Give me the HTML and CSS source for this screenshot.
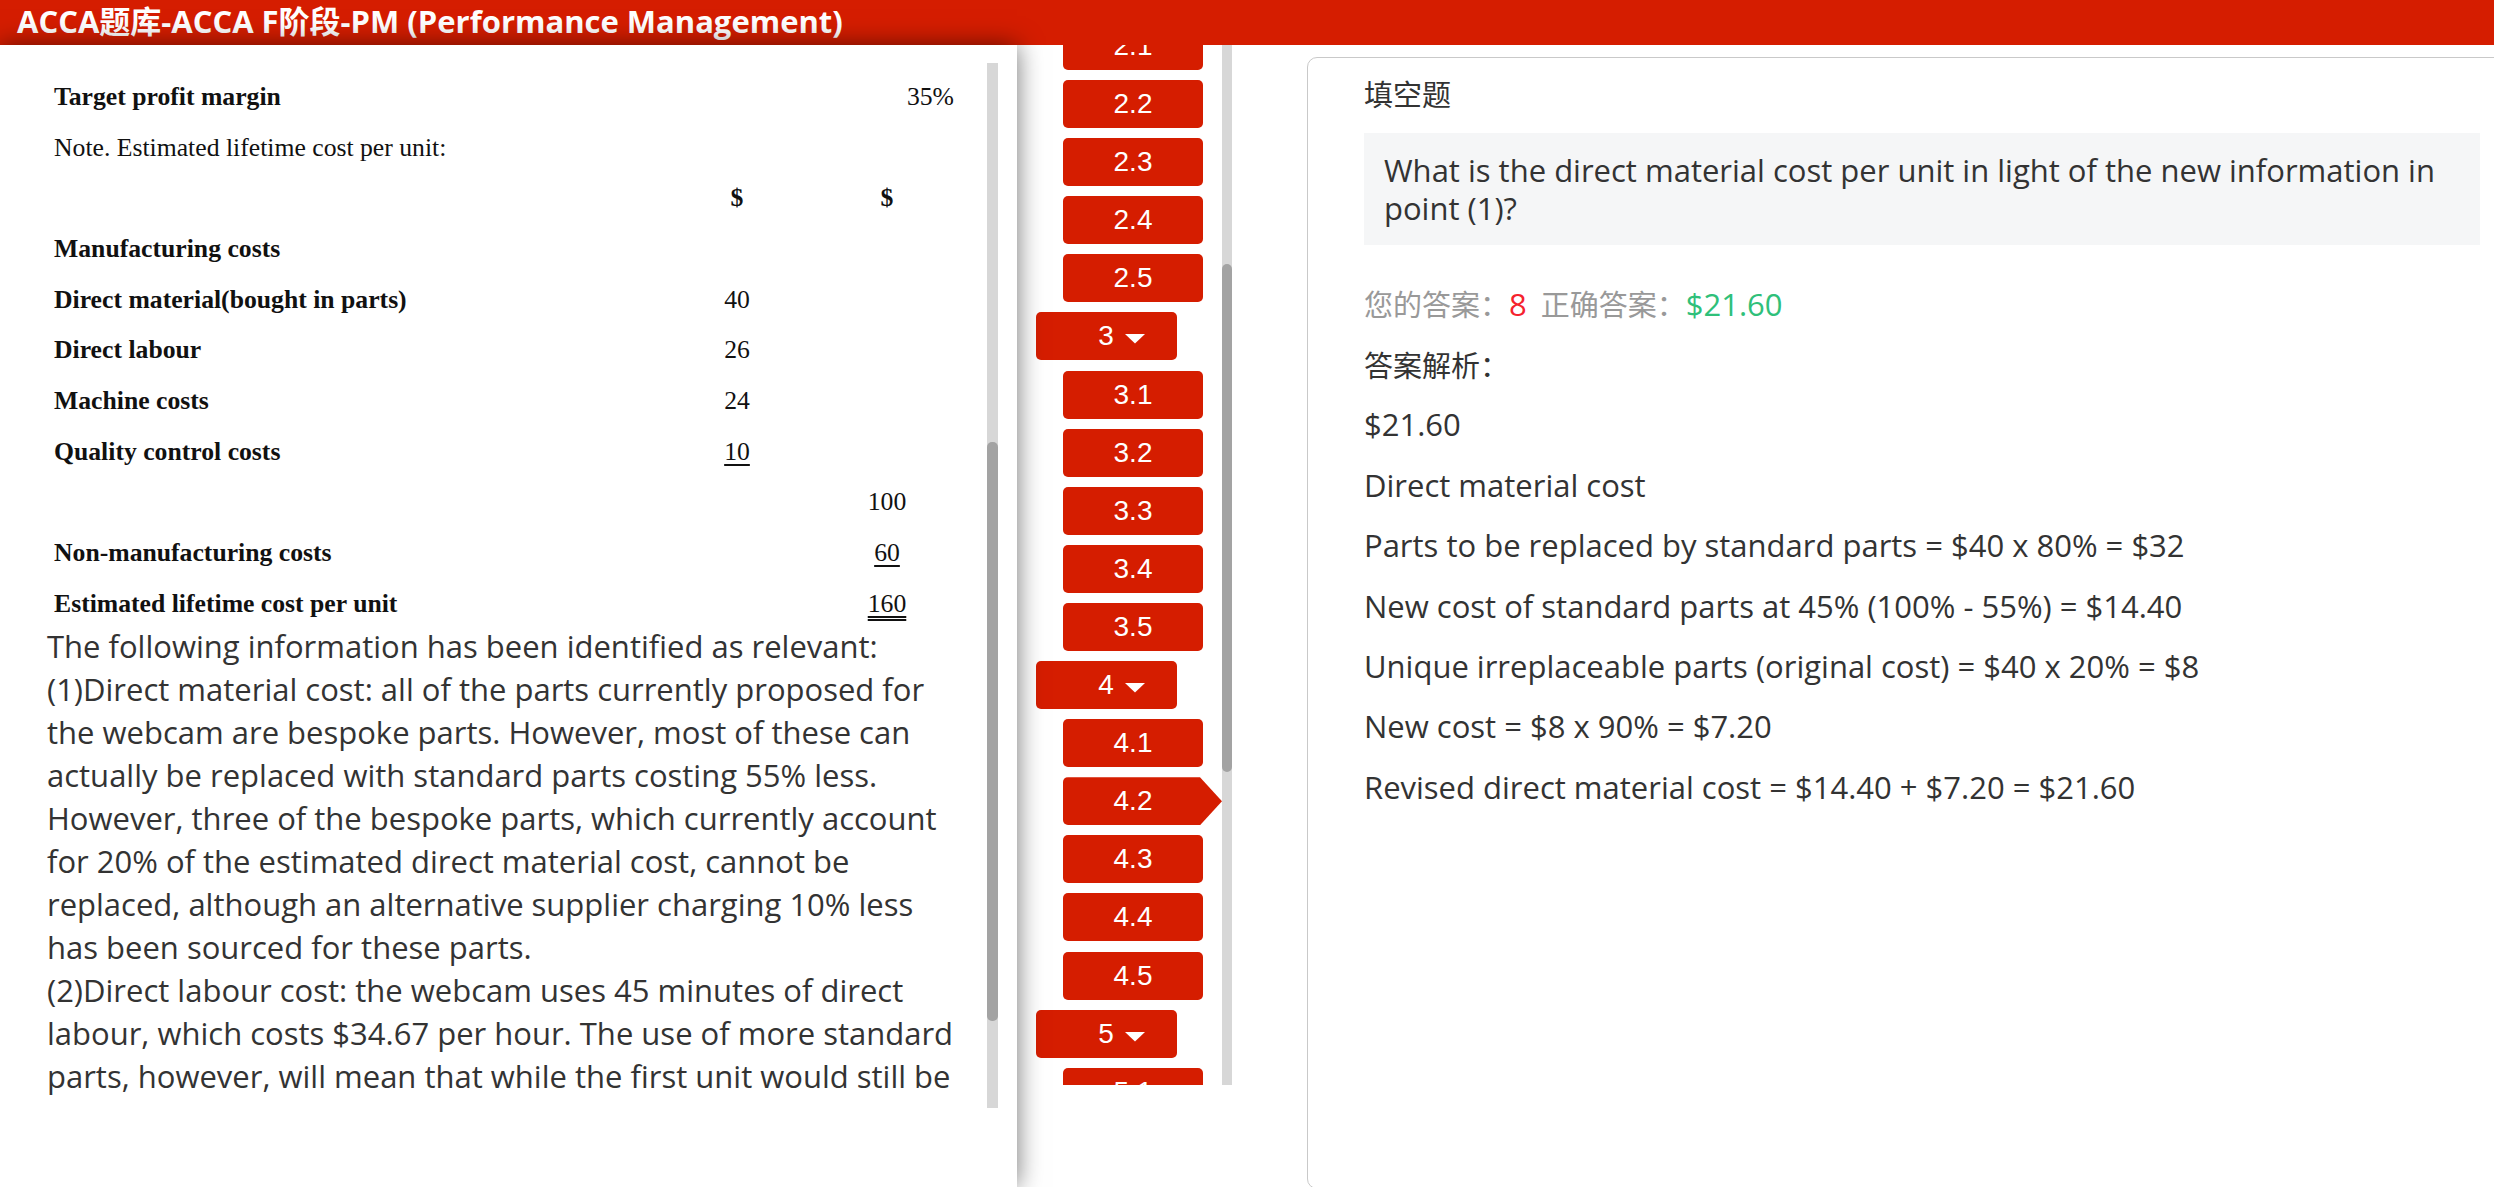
FILE: index.html
```html
<!DOCTYPE html>
<html lang="zh-CN">
<head>
<meta charset="utf-8">
<title>ACCA题库-ACCA F阶段-PM (Performance Management)</title>
<link rel="stylesheet" href="styles.css">
</head>
<body>
<header class="topbar">
  <h1 class="topbar-title">ACCA题库-ACCA F阶段-PM (Performance Management)</h1>
</header>
<main class="layout">
  <section class="doc">
    <div class="doc-scroll">
      <div class="doc-content">
        <div class="cost-table">
          <div class="row"><span class="lbl">Target profit margin</span><span class="c1"></span><span class="c2 pct">35%</span></div>
          <div class="row"><span class="note">Note. Estimated lifetime cost per unit:</span></div>
          <div class="row"><span class="lbl"></span><span class="c1 b">$</span><span class="c2 b">$</span></div>
          <div class="row"><span class="lbl">Manufacturing costs</span></div>
          <div class="row"><span class="lbl">Direct material(bought in parts)</span><span class="c1">40</span><span class="c2"></span></div>
          <div class="row"><span class="lbl">Direct labour</span><span class="c1">26</span><span class="c2"></span></div>
          <div class="row"><span class="lbl">Machine costs</span><span class="c1">24</span><span class="c2"></span></div>
          <div class="row"><span class="lbl">Quality control costs</span><span class="c1"><u class="ul">10</u></span><span class="c2"></span></div>
          <div class="row"><span class="lbl"></span><span class="c1"></span><span class="c2">100</span></div>
          <div class="row"><span class="lbl">Non-manufacturing costs</span><span class="c1"></span><span class="c2"><u class="ul">60</u></span></div>
          <div class="row"><span class="lbl">Estimated lifetime cost per unit</span><span class="c1"></span><span class="c2"><u class="ul dbl">160</u></span></div>
        </div>
        <p class="doc-text">The following information has been identified as relevant:<br>(1)Direct material cost: all of the parts currently proposed for<br>the webcam are bespoke parts. However, most of these can<br>actually be replaced with standard parts costing 55% less.<br>However, three of the bespoke parts, which currently account<br>for 20% of the estimated direct material cost, cannot be<br>replaced, although an alternative supplier charging 10% less<br>has been sourced for these parts.<br>(2)Direct labour cost: the webcam uses 45 minutes of direct<br>labour, which costs $34.67 per hour. The use of more standard<br>parts, however, will mean that while the first unit would still be</p>
      </div>
      <div class="vscroll doc-vscroll"><div class="thumb doc-thumb"></div></div>
    </div>
  </section>

  <nav class="outline">
    <div class="outline-list">
      <div class="outline-inner">
        <a class="node sub">2.1</a>
        <a class="node sub">2.2</a>
        <a class="node sub">2.3</a>
        <a class="node sub">2.4</a>
        <a class="node sub">2.5</a>
        <a class="node group"><span>3</span><svg class="caret" width="20" height="10" viewBox="0 0 20 10"><polygon points="0,0 20,0 10,9.5" fill="#fff"/></svg></a>
        <a class="node sub">3.1</a>
        <a class="node sub">3.2</a>
        <a class="node sub">3.3</a>
        <a class="node sub">3.4</a>
        <a class="node sub">3.5</a>
        <a class="node group"><span>4</span><svg class="caret" width="20" height="10" viewBox="0 0 20 10"><polygon points="0,0 20,0 10,9.5" fill="#fff"/></svg></a>
        <a class="node sub">4.1</a>
        <a class="node sub active">4.2</a>
        <a class="node sub">4.3</a>
        <a class="node sub">4.4</a>
        <a class="node sub">4.5</a>
        <a class="node group"><span>5</span><svg class="caret" width="20" height="10" viewBox="0 0 20 10"><polygon points="0,0 20,0 10,9.5" fill="#fff"/></svg></a>
        <a class="node sub">5.1</a>
      </div>
    </div>
    <div class="vscroll outline-vscroll"><div class="thumb outline-thumb"></div></div>
  </nav>

  <section class="card">
    <div class="qtype cjk">填空题</div>
    <div class="qbox">What is the direct material cost per unit in light of the new information in<br>point (1)?</div>
    <div class="answer-row"><span class="muted cjk">您的答案：</span><span class="wrong">8</span><span class="muted cjk gap">正确答案：</span><span class="right">$21.60</span></div>
    <p class="ap"><span class="cjk">答案解析：</span></p>
    <p class="ap first-latin">$21.60</p>
    <p class="ap">Direct material cost</p>
    <p class="ap">Parts to be replaced by standard parts = $40 x 80% = $32</p>
    <p class="ap">New cost of standard parts at 45% (100% - 55%) = $14.40</p>
    <p class="ap">Unique irreplaceable parts (original cost) = $40 x 20% = $8</p>
    <p class="ap">New cost = $8 x 90% = $7.20</p>
    <p class="ap">Revised direct material cost = $14.40 + $7.20 = $21.60</p>
  </section>
</main>
</body>
</html>
```

FILE: styles.css
```css
* { box-sizing: border-box; margin: 0; padding: 0; }

body {
  width: 2494px;
  height: 1187px;
  overflow: hidden;
  background: #fff;
  color: #333;
  font-family: "Open Sans", "Noto Sans CJK SC", sans-serif;
}

.topbar {
  position: relative;
  z-index: 1;
  height: 45px;
  background: #d51d00;
}

.topbar-title {
  font-size: 31px;
  font-weight: 700;
  line-height: 42px;
  color: #fff;
  padding-left: 17px;
  white-space: nowrap;
}

.layout {
  display: flex;
  height: 1142px;
}

/* ---------- left document panel ---------- */
.doc {
  position: relative;
  z-index: 2;
  width: 1017px;
  flex: none;
  background: #fff;
  box-shadow: 0 0 24px rgba(0, 0, 0, 0.55);
}

.doc-scroll {
  display: flex;
  height: 1045px;
  margin-top: 18px;
  margin-right: 19px;
}

.doc-content {
  flex: 1;
  overflow: hidden;
  padding-left: 47px;
}

.cost-table {
  padding-top: 8.6px;
  padding-left: 7px;
  font-family: "Liberation Serif", "Times New Roman", serif;
  font-size: 25.7px;
  color: #111;
}

.row {
  display: grid;
  grid-template-columns: 640px 86px 214px;
  height: 50.7px;
  align-items: center;
  white-space: nowrap;
}

.lbl { font-weight: 700; }
.note { grid-column: 1 / 4; }
.b { font-weight: 700; }
.c1, .c2 { text-align: center; }
.pct { text-align: right; padding-right: 40px; }

.ul {
  text-decoration: underline;
  text-underline-offset: 4px;
  text-decoration-thickness: 1.5px;
}
.ul.dbl { text-decoration-style: double; }

.doc-text {
  margin-top: -4px;
  font-size: 31px;
  line-height: 43px;
  white-space: nowrap;
  color: #333;
}

.vscroll {
  flex: none;
  background: #d7d7d7;
}

.thumb {
  background: #a3a3a3;
  border-radius: 5px;
}

.doc-vscroll { width: 11px; }
.doc-thumb { margin-top: 379px; height: 579px; }

/* ---------- outline nav ---------- */
.outline {
  display: flex;
  width: 215px;
  flex: none;
  height: 1040px;
}

.outline-list {
  flex: 1;
  overflow: hidden;
  padding-left: 19px;
}

.outline-inner { margin-top: -23px; }

.node {
  display: flex;
  align-items: center;
  justify-content: center;
  height: 48px;
  margin-bottom: 10.1px;
  border-radius: 5px;
  background: #d51d00;
  color: #fff;
  font-family: "Liberation Sans", Arial, sans-serif;
  font-size: 28px;
}

.node.sub { width: 140px; margin-left: 27px; }

.node.group {
  width: 141px;
  padding-left: 30px;
  gap: 11px;
}

.caret { margin-top: 6px; }

.node.active {
  width: 159px;
  padding-right: 19px;
  border-radius: 5px 0 0 5px;
  clip-path: polygon(0 0, 137px 0, 100% 50%, 137px 100%, 0 100%);
}

.outline-vscroll { width: 10px; height: 1040px; }
.outline-thumb { margin-top: 219px; height: 508px; }

/* ---------- right answer card ---------- */
.card {
  flex: none;
  width: 1230px;
  height: 1132px;
  margin-left: 75px;
  margin-top: 12px;
  border: 1px solid #c9c9c9;
  border-radius: 10px;
  padding: 18px 56px;
  font-size: 31px;
}

.cjk { font-size: 29px; }

.qtype { line-height: 38px; color: #333; }

.qbox {
  margin-top: 19px;
  background: #f5f6f7;
  padding: 18px 20px;
  line-height: 38px;
  color: #333;
  white-space: nowrap;
}

.answer-row {
  margin-top: 39px;
  line-height: 40px;
}

.muted { color: #999; }
.wrong { color: #f5222d; }
.right { color: #2fc07a; }
.gap { margin-left: 14px; }

.ap {
  margin-top: 20.4px;
  line-height: 40px;
  color: #333;
}

.ap.first-latin { margin-top: 18px; }
```
